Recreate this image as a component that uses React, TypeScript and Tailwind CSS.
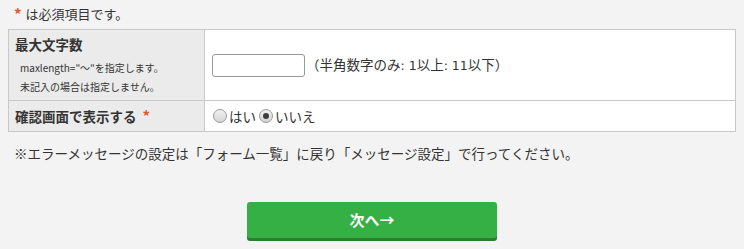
import React from "react";

const font = { fontFamily: '"Noto Sans CJK JP", "Noto Sans", sans-serif' };
const latinWide = { fontFamily: '"DejaVu Sans", "Noto Sans CJK JP", sans-serif' };

function Radio({ checked }: { checked?: boolean }) {
  return (
    <span className="inline-flex h-[14px] w-[14px] items-center justify-center rounded-full border border-[#9a9a9a] bg-gradient-to-b from-[#f2f2f2] to-[#d4d4d4]">
      {checked && <span className="h-[6px] w-[6px] rounded-full bg-[#3c3c3c]" />}
    </span>
  );
}

export default function App() {
  return (
    <div
      className="min-h-[249px] bg-[#f3f3f3] px-2 text-[#333] antialiased"
      style={font}
    >
      <p className="flex h-[29px] items-center pb-[2px] pl-[6px] text-[13px] leading-[18px]">
        <span className="mr-[4px] text-[15px] font-bold text-[#e4572e]">*</span>は必須項目です。
      </p>

      <div className="border border-[#c8c8c8] bg-white">
        <div className="grid h-[70px] grid-cols-[196px_1fr]">
          <div className="border-r border-[#c8c8c8] bg-[#ebebeb] pl-[6px] pt-[6px]">
            <div className="text-[13.5px] font-bold leading-[16px]">最大文字数</div>
            <div className="mt-[6px] pl-[5px] text-[10px] leading-[19px]">
              <div>maxlength="〜"を指定します。</div>
              <div>未記入の場合は指定しません。</div>
            </div>
          </div>
          <div className="flex items-center pl-[7px]">
            <input
              type="text"
              className="h-[23px] w-[93px] rounded-[3px] border border-[#999] bg-white outline-none"
            />
            <span className="ml-[1px] text-[13.5px] leading-[18px]">
              （半角数字のみ<span style={latinWide} className="text-[12.5px]">: 1</span>以上<span style={latinWide} className="text-[12.5px]">: 11</span>以下）
            </span>
          </div>
        </div>
        <div className="grid h-[31px] grid-cols-[196px_1fr] border-t border-[#c8c8c8]">
          <div className="flex items-center border-r border-[#c8c8c8] bg-[#ebebeb] pl-[6px] text-[13.5px] font-bold leading-[16px]">
            確認画面で表示する<span className="ml-[6px] text-[15px] text-[#e4572e]">*</span>
          </div>
          <div className="flex items-center pl-[8px] text-[13.5px] leading-[18px]">
            <Radio />
            <span className="ml-[2px]">はい</span>
            <span className="ml-[3px] inline-flex">
              <Radio checked />
            </span>
            <span className="ml-[2px]">いいえ</span>
          </div>
        </div>
      </div>

      <p className="mt-[13px] pl-[6px] text-[13.5px] leading-[16px]">
        ※エラーメッセージの設定は「フォーム一覧」に戻り「メッセージ設定」で行ってください。
      </p>

      <div className="mt-[41px] flex justify-center">
        <button className="h-[36px] w-[250px] rounded-[3px] bg-[#35b045] text-[15px] font-bold text-white shadow-[0_3px_0_#2d7c34]">
          次へ→
        </button>
      </div>
    </div>
  );
}
